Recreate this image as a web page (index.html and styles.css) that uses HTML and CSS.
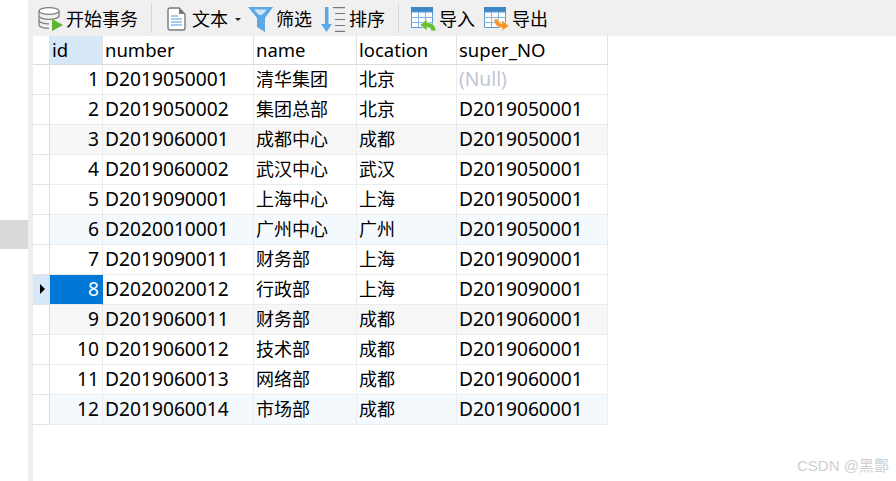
FILE: index.html
```html
<!DOCTYPE html>
<html lang="zh">
<head>
<meta charset="utf-8">
<title>部门表</title>
<link rel="stylesheet" href="styles.css">
</head>
<body>
<div class="page">
  <div class="rail"><div class="rail-handle"></div></div>
  <div class="main">
    <div class="toolbar">
      <div class="tool tool-begin">
        <svg class="icon" width="25" height="24" viewBox="0 0 25 24"><g fill="none" stroke="#808080" stroke-width="1.300"><ellipse cx="11" cy="4" rx="10" ry="3.300" fill="#fff"/><path d="M1 4v14c0 1.800 4.500 3.300 10 3.300M21 4v6M1 9c0 1.800 4.500 3.300 10 3.300S21 10.800 21 9M1 13.500c0 1.800 4.500 3.300 10 3.300"/></g><path d="M14 12l11 6-11 6z" fill="#5cb531"/></svg>
        <span>开始事务</span>
      </div>
      <div class="sep"></div>
      <div class="tool tool-text">
        <svg class="icon" width="19" height="24" viewBox="0 0 19 24"><path d="M1 3a2 2 0 0 1 2-2h9l6 6v14a2 2 0 0 1-2 2H3a2 2 0 0 1-2-2z" fill="#fff" stroke="#7a7a7a" stroke-width="1.400"/><path d="M12 1v6h6z" fill="#7a7a7a"/><path d="M4 9h7M4 12h11M4 15h11M4 18h11" stroke="#4a9be0" stroke-width="1.200"/></svg>
        <span>文本</span>
        <i class="caret"></i>
      </div>
      <div class="tool tool-filter">
        <svg class="icon" width="25" height="25" viewBox="0 0 25 25"><path d="M0 0h25L17 11v14l-8-5v-9z" fill="#5aa9e6"/><path d="M6 2.500h13l-5 5.500h-3z" fill="#cfe5f7"/></svg>
        <span>筛选</span>
      </div>
      <div class="tool tool-sort">
        <svg class="icon" width="24" height="25" viewBox="0 0 24 25"><path d="M4 0h3.500v17H11l-5.500 8L0 17h4z" fill="#5aa9e6"/><path d="M12 .6h12M14 6.500h10M14 12.500h10M14 18.500h10M14 24.400h10" stroke="#777" stroke-width="1.200"/></svg>
        <span>排序</span>
      </div>
      <div class="sep sep-second"></div>
      <div class="tool tool-import">
        <svg class="icon" width="25" height="24" viewBox="0 0 25 24"><path d="M0 0h22v5H0z" fill="#3e86c6"/><path d="M.5 5h21v15.500H.5z" fill="#fff" stroke="#5a9bd4"/><path d="M7.500 5v15M14.500 5v15M0 10.500h22M0 15.500h22" stroke="#7fb3e0"/><path d="M9 18l7-6v3.500c5 0 9 3 9 8.500h-5c0-2.500-1.500-4-4-4v4z" fill="#67c02f" stroke="#f0f0f0" stroke-width=".7"/></svg>
        <span>导入</span>
      </div>
      <div class="tool tool-export">
        <svg class="icon" width="25" height="24" viewBox="0 0 25 24"><path d="M0 0h22v5H0z" fill="#3e86c6"/><path d="M.5 5h21v15.500H.5z" fill="#fff" stroke="#5a9bd4"/><path d="M7.500 5v15M14.500 5v15M0 10.500h22M0 15.500h22" stroke="#7fb3e0"/><path d="M10 12h4.500c0 3 1.500 4.500 3.500 4.500V13l7 6-7 5v-3.500c-5 0-8-3.500-8-8.500z" fill="#f7941d" stroke="#f0f0f0" stroke-width=".7"/></svg>
        <span>导出</span>
      </div>
    </div>
    <div class="content">
      <div class="grid">
        <div class="row row-head">
          <div class="cell marker"></div>
          <div class="cell id is-active">id</div>
          <div class="cell number">number</div>
          <div class="cell name">name</div>
          <div class="cell loc">location</div>
          <div class="cell sup">super_NO</div>
        </div>
        <div class="row"><div class="cell marker"></div><div class="cell id">1</div><div class="cell number">D2019050001</div><div class="cell name zh">清华集团</div><div class="cell loc zh">北京</div><div class="cell sup null">(Null)</div></div>
        <div class="row"><div class="cell marker"></div><div class="cell id">2</div><div class="cell number">D2019050002</div><div class="cell name zh">集团总部</div><div class="cell loc zh">北京</div><div class="cell sup">D2019050001</div></div>
        <div class="row tint-gray"><div class="cell marker"></div><div class="cell id">3</div><div class="cell number">D2019060001</div><div class="cell name zh">成都中心</div><div class="cell loc zh">成都</div><div class="cell sup">D2019050001</div></div>
        <div class="row"><div class="cell marker"></div><div class="cell id">4</div><div class="cell number">D2019060002</div><div class="cell name zh">武汉中心</div><div class="cell loc zh">武汉</div><div class="cell sup">D2019050001</div></div>
        <div class="row"><div class="cell marker"></div><div class="cell id">5</div><div class="cell number">D2019090001</div><div class="cell name zh">上海中心</div><div class="cell loc zh">上海</div><div class="cell sup">D2019050001</div></div>
        <div class="row tint-blue"><div class="cell marker"></div><div class="cell id">6</div><div class="cell number">D2020010001</div><div class="cell name zh">广州中心</div><div class="cell loc zh">广州</div><div class="cell sup">D2019050001</div></div>
        <div class="row"><div class="cell marker"></div><div class="cell id">7</div><div class="cell number">D2019090011</div><div class="cell name zh">财务部</div><div class="cell loc zh">上海</div><div class="cell sup">D2019090001</div></div>
        <div class="row"><div class="cell marker is-current"><i class="pointer"></i></div><div class="cell id is-selected">8</div><div class="cell number">D2020020012</div><div class="cell name zh">行政部</div><div class="cell loc zh">上海</div><div class="cell sup">D2019090001</div></div>
        <div class="row tint-gray"><div class="cell marker"></div><div class="cell id">9</div><div class="cell number">D2019060011</div><div class="cell name zh">财务部</div><div class="cell loc zh">成都</div><div class="cell sup">D2019060001</div></div>
        <div class="row"><div class="cell marker"></div><div class="cell id">10</div><div class="cell number">D2019060012</div><div class="cell name zh">技术部</div><div class="cell loc zh">成都</div><div class="cell sup">D2019060001</div></div>
        <div class="row"><div class="cell marker"></div><div class="cell id">11</div><div class="cell number">D2019060013</div><div class="cell name zh">网络部</div><div class="cell loc zh">成都</div><div class="cell sup">D2019060001</div></div>
        <div class="row tint-blue"><div class="cell marker"></div><div class="cell id">12</div><div class="cell number">D2019060014</div><div class="cell name zh">市场部</div><div class="cell loc zh">成都</div><div class="cell sup">D2019060001</div></div>
      </div>
    </div>
  </div>
</div>
<div class="watermark">CSDN @黑鄷</div>
</body>
</html>
```
FILE: styles.css
```css
* { box-sizing: border-box; }
html, body { margin: 0; height: 100%; background: #fff; overflow: hidden; }
body {
  font-family: "Noto Sans", "Noto Sans CJK SC", sans-serif;
  color: #000;
}
.page { display: flex; height: 481px; }
.rail { width: 28px; flex: none; padding-top: 220px; }
.rail-handle { height: 29px; background: #d9d9d9; }
.main { flex: 1; display: flex; flex-direction: column; min-width: 0; }

.toolbar {
  height: 36px;
  flex: none;
  background: #f0f0f0;
  display: flex;
  align-items: center;
  padding-left: 10px;
  font-family: "Noto Sans CJK SC", sans-serif;
  font-size: 18px;
}
.tool { display: flex; align-items: center; flex: none; }
.tool .icon { flex: none; margin-right: 4px; margin-top: 2px; }
.tool-text .icon { margin-right: 6px; }
.tool-filter .icon { margin-right: 3px; }
.tool-begin .icon { margin-right: 3px; }
.sep { width: 1px; height: 30px; background: #d8d8d8; margin: 0 15px 0 13px; flex: none; }
.sep-second { margin: 0 12px 0 13px; }
.caret {
  width: 0; height: 0;
  margin: 2px 7px 0 7px;
  border-left: 3px solid transparent;
  border-right: 3px solid transparent;
  border-top: 3px solid #222;
}
.tool-sort { margin-left: 9px; }
.tool-export { margin-left: 9px; }
.tool-import .icon, .tool-export .icon { margin-right: 3px; }

.content { flex: 1; border-left: 5px solid #eee; }
.grid { display: flex; flex-direction: column; width: 575px; }
.row { display: flex; height: 30px; }
.row-head { height: 29px; }
.cell {
  flex: none;
  height: 100%;
  border-right: 1px solid #ececec;
  border-bottom: 1px solid #ececec;
  padding: 0 2px;
  font-size: 19.200px;
  line-height: 28px;
  white-space: nowrap;
  overflow: hidden;
}
.row-head .cell { border-right-color: #e2e2e2; border-bottom-color: #dcdcdc; font-size: 18.500px; }
.marker { width: 17px; border-right-color: #dcdcdc; border-bottom-color: #e4e4e4; position: relative; }
.id { width: 53px; text-align: right; padding-right: 3px; }
.row-head .id { text-align: left; }
.number { width: 151px; }
.name { width: 103px; }
.loc { width: 100px; }
.sup { width: 151px; }
.zh { font-family: "Noto Sans CJK SC", sans-serif; font-size: 18px; line-height: 27px; }
.null { color: #c0c6d6; }

.tint-gray .cell:not(.marker) { background: #f7f7f7; }
.tint-blue .cell:not(.marker) { background: #f4f9fd; }
.is-active { background: #d6e8f7; }
.is-current { background: #d6e8f7; }
.is-selected { background: #0078d7; color: #fff; border-right-color: #0078d7; }
.pointer {
  position: absolute;
  left: 7px;
  top: 9px;
  width: 0; height: 0;
  border-top: 5px solid transparent;
  border-bottom: 5px solid transparent;
  border-left: 5px solid #000;
}
.watermark {
  position: absolute;
  left: 797px;
  top: 456px;
  font-family: "Liberation Sans", "Noto Sans CJK SC", sans-serif;
  font-size: 15px;
  line-height: 20px;
  color: #cfcfcf;
  white-space: nowrap;
}
```
